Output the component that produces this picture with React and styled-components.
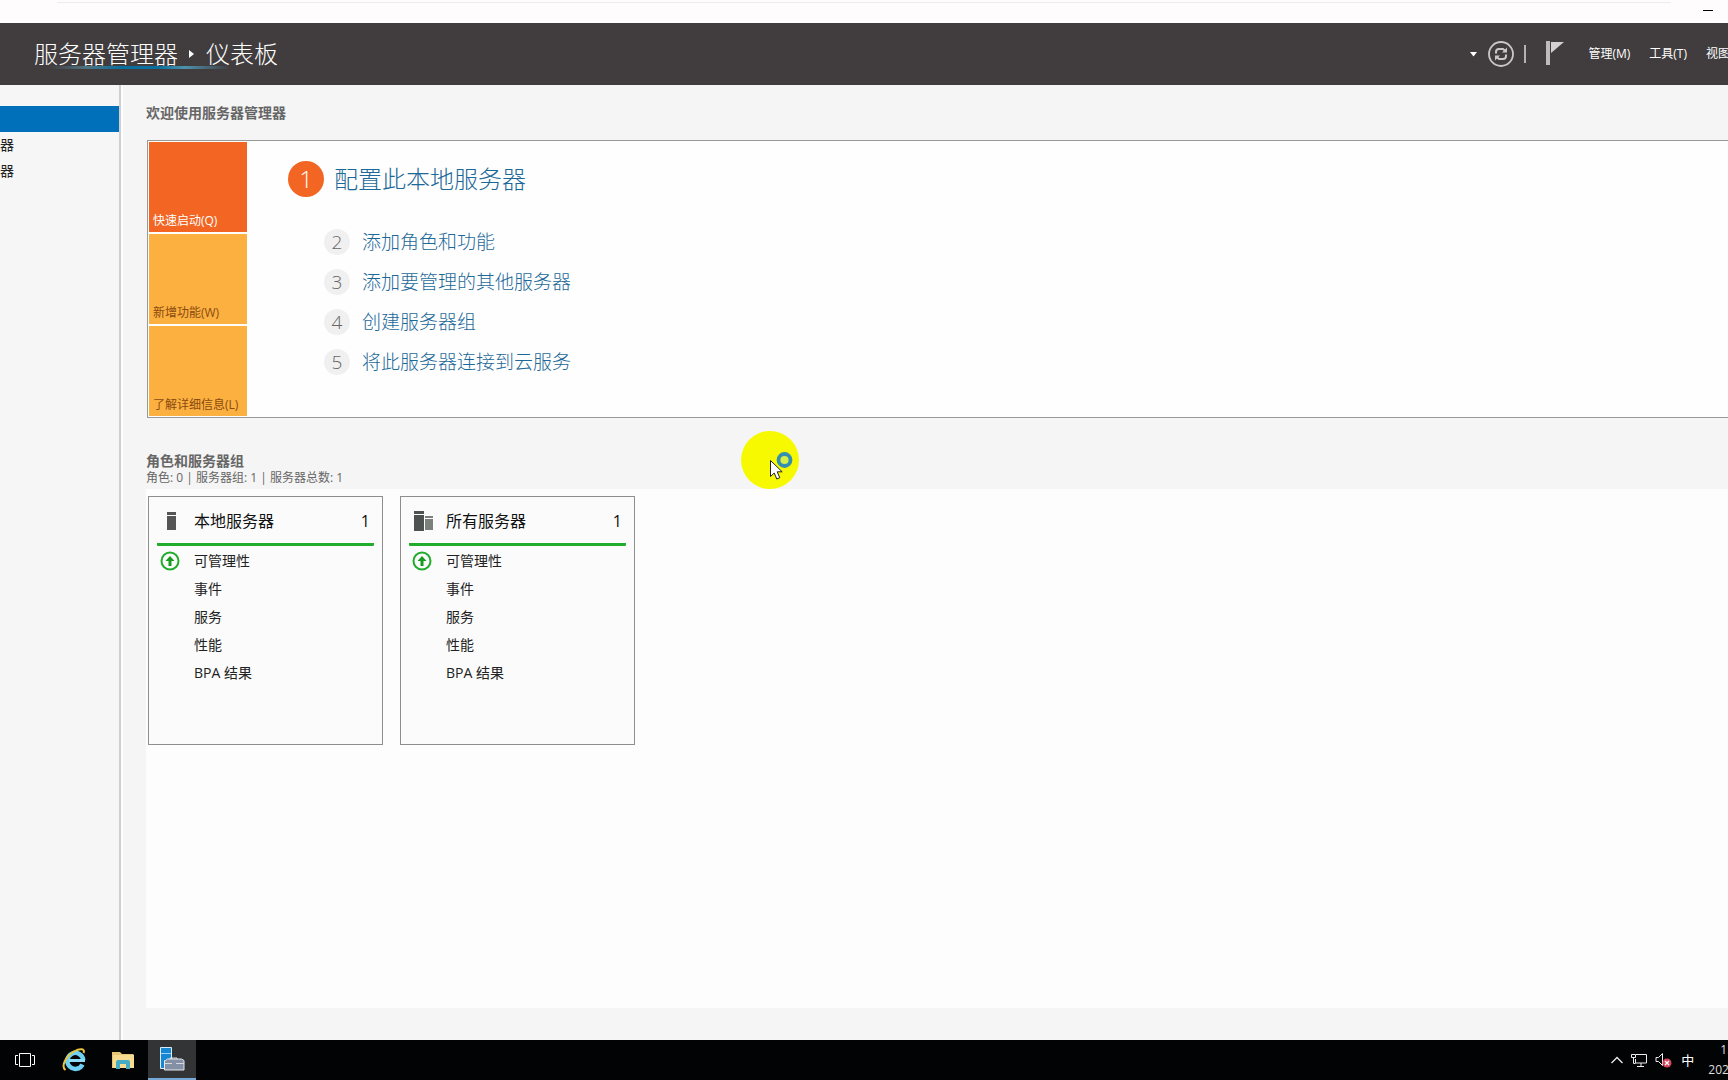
import React from 'react'
import styled, { createGlobalStyle } from 'styled-components'

const steps = [
  { number: 2, label: '添加角色和功能' },
  { number: 3, label: '添加要管理的其他服务器' },
  { number: 4, label: '创建服务器组' },
  { number: 5, label: '将此服务器连接到云服务' },
]

const groups = [
  { name: '本地服务器', count: 1, icon: ServerIcon },
  { name: '所有服务器', count: 1, icon: ServersIcon },
]

const groupItems = ['可管理性', '事件', '服务', '性能', 'BPA 结果']

function ServerIcon() {
  return (
    <svg width="20" height="20" viewBox="0 0 20 20" fill="#555">
      <rect x="6" y="1" width="9" height="3" />
      <rect x="6" y="5" width="9" height="14" />
    </svg>
  )
}

function ServersIcon() {
  return (
    <svg width="20" height="20" viewBox="0 0 20 20">
      <path d="M1 0h10v3H1zM1 4h10v16H1z" fill="#4d514f" />
      <path d="M12 5h8v2h-8zM12 8h8v11h-8z" fill="#7b807d" />
    </svg>
  )
}

function UpIcon() {
  return (
    <svg width="20" height="20" viewBox="0 0 20 20" fill="none">
      <circle cx="10" cy="10" r="8.5" stroke="#22ac2c" strokeWidth="2" />
      <path d="M10 5l4.500 5h-3v5h-3v-5h-3z" fill="#179b21" />
    </svg>
  )
}

function RefreshIcon() {
  return (
    <svg width="26" height="26" viewBox="0 0 26 26" fill="none" stroke="#c9c7c7">
      <circle cx="13" cy="13" r="12" strokeWidth="1.8" />
      <path d="M8 12.500V11a3 3 0 0 1 3-3h4l3 2.500M18 13.500V15a3 3 0 0 1-3 3h-4l-3-2.500" strokeWidth="2" />
      <path d="M19 6.500v5h-5zM7 19.500v-5h5z" fill="#c9c7c7" stroke="none" />
    </svg>
  )
}

function FlagIcon() {
  return (
    <svg width="18" height="26" viewBox="0 0 18 26">
      <path d="M0 0h4v24H0z" fill="#bdbbbb" />
      <path d="M5 1h13L5 12z" fill="#d2d0d0" />
    </svg>
  )
}

function TaskViewIcon() {
  return (
    <svg width="20" height="14" viewBox="0 0 20 14" fill="none" stroke="#fff">
      <path d="M4.500.5h11v13h-11zM3 2.500H.5v9H3M17 2.500h2.500v9H17" />
    </svg>
  )
}

function BrowserIcon() {
  return (
    <svg width="24" height="24" viewBox="0 0 24 24" fill="none">
      <path
        d="M20.500 16.500a8 8 0 1 1 .8-4.500"
        stroke="#6fd0f5"
        strokeWidth="4.500"
      />
      <path d="M7 12.500h16" stroke="#8fdcf8" strokeWidth="3" />
      <path
        d="M3.500 22C-1.500 18 4 8 12 3.500 18 0 23.500.5 21.500 5"
        stroke="#e9c53b"
        strokeWidth="2"
      />
    </svg>
  )
}

function FolderIcon() {
  return (
    <svg width="22" height="20" viewBox="0 0 22 20">
      <path d="M0 2h8l2 2h11.500v14H0z" fill="#e4c673" />
      <path d="M1 5h21v13H1z" fill="#f6dc90" />
      <path d="M4 19v-7q0-2 2-2h10q2 0 2 2v7h-4v-5H8v5z" fill="#45acc6" />
    </svg>
  )
}

function ManagerIcon() {
  return (
    <svg width="26" height="26" viewBox="0 0 26 26">
      <path d="M1.500 1.500h11v21h-11z" fill="#1787d2" stroke="#d8ecfa" />
      <path d="M2 7.500h10" stroke="#9bd2f5" />
      <path d="M11 13.500v-1.500h7v1.500" fill="none" stroke="#dde1e8" />
      <path d="M6.500 14.500l2-1.500h14l2.500 1.500v9.500H5.500v-9.500z" fill="#8490a5" stroke="#e5e8ee" />
      <path d="M6 17.500h7m4 0h8" stroke="#d4d9e2" />
    </svg>
  )
}

function TrayChevron() {
  return (
    <svg width="12" height="8" viewBox="0 0 12 8" fill="none" stroke="#e8e8e8" strokeWidth="1.400">
      <path d="M.5 7L6 1.500 11.500 7" />
    </svg>
  )
}

function NetworkIcon() {
  return (
    <svg width="16" height="14" viewBox="0 0 16 14" fill="none" stroke="#eee">
      <path d="M5 1.500h10.500v8.500H4.500V6M10 10v3M6 13.500h7" />
      <path d="M.5 1.500h4v3h-4zM2.500 5v5.500h2" />
    </svg>
  )
}

function VolumeIcon() {
  return (
    <svg width="18" height="16" viewBox="0 0 18 16" fill="none">
      <path d="M1 5.500h2.500l4-4v12l-4-4H1z" stroke="#eee" />
      <circle cx="12" cy="11" r="4.500" fill="#d4455a" />
      <path d="M10 9l4 4m0-4l-4 4" stroke="#fff" strokeWidth="1.200" />
    </svg>
  )
}

function Pointer() {
  return (
    <PointerSpot width="60" height="60" viewBox="0 0 60 60" aria-hidden="true">
      <circle cx="29" cy="29" r="29" fill="#f7f900" />
      <circle cx="43.500" cy="29" r="6" fill="#d6ee48" stroke="#358fae" strokeWidth="3.800" />
      <path
        d="M29.500 29.500v16l3.700-3.500 2.600 6 3-1.300-2.600-5.900h5z"
        fill="#fff"
        stroke="#222"
      />
    </PointerSpot>
  )
}

function GroupCard({ group }) {
  const Icon = group.icon
  return (
    <Card>
      <CardHeader>
        <Icon />
        <CardTitle>{group.name}</CardTitle>
        <span>{group.count}</span>
      </CardHeader>
      <CardList>
        {groupItems.map((item, i) => (
          <CardItem key={item}>
            <IconSlot>{i === 0 && <UpIcon />}</IconSlot>
            <CardLink href="#">{item}</CardLink>
          </CardItem>
        ))}
      </CardList>
    </Card>
  )
}

function App() {
  return (
    <Desktop>
      <GlobalStyle />
      <TitleBar>
        <Minimize aria-label="最小化" />
      </TitleBar>
      <Header>
        <Breadcrumb>
          <span>服务器管理器</span>
          <svg width="6" height="10" viewBox="0 0 6 10">
            <path d="M0 1l5 4-5 4z" fill="#fff" />
          </svg>
          <span>仪表板</span>
        </Breadcrumb>
        <Tools>
          <IconButton aria-label="历史记录">
            <svg width="8" height="5" viewBox="0 0 8 5">
              <path d="M0 0h7L3.500 4.500z" fill="#fff" />
            </svg>
          </IconButton>
          <IconButton aria-label="刷新">
            <RefreshIcon />
          </IconButton>
          <Separator />
          <IconButton aria-label="通知">
            <FlagIcon />
          </IconButton>
        </Tools>
        <Menu>
          <MenuButton>管理(M)</MenuButton>
          <MenuButton>工具(T)</MenuButton>
          <MenuButton>视图</MenuButton>
        </Menu>
      </Header>
      <Body>
        <Sidebar>
          <SideLink href="#" aria-label="仪表板" $active />
          <SideLink href="#">器</SideLink>
          <SideLink href="#">器</SideLink>
        </Sidebar>
        <Content>
          <SectionTitle>欢迎使用服务器管理器</SectionTitle>
          <Welcome>
            <Tiles>
              <Tile $active>快速启动(Q)</Tile>
              <Tile>新增功能(W)</Tile>
              <Tile>了解详细信息(L)</Tile>
            </Tiles>
            <Steps>
              <MainStep>
                <MainNumber>1</MainNumber>
                <StepLink href="#">配置此本地服务器</StepLink>
              </MainStep>
              {steps.map((step) => (
                <Step key={step.number}>
                  <StepNumber>{step.number}</StepNumber>
                  <StepLink href="#">{step.label}</StepLink>
                </Step>
              ))}
            </Steps>
          </Welcome>
          <GroupsHeading>
            <SectionTitle>角色和服务器组</SectionTitle>
            <Summary>角色: 0 | 服务器组: 1 | 服务器总数: 1</Summary>
          </GroupsHeading>
          <Groups>
            {groups.map((group) => (
              <GroupCard key={group.name} group={group} />
            ))}
          </Groups>
        </Content>
      </Body>
      <Taskbar>
        <TaskButton aria-label="任务视图">
          <TaskViewIcon />
        </TaskButton>
        <TaskButton aria-label="Internet Explorer">
          <BrowserIcon />
        </TaskButton>
        <TaskButton aria-label="文件资源管理器">
          <FolderIcon />
        </TaskButton>
        <TaskButton aria-label="服务器管理器" $active>
          <ManagerIcon />
        </TaskButton>
        <Tray>
          <TrayChevron />
          <NetworkIcon />
          <VolumeIcon />
          <span>中</span>
          <Clock>
            <Time>15</Time>
            <span>202</span>
          </Clock>
        </Tray>
      </Taskbar>
      <Pointer />
    </Desktop>
  )
}

const GlobalStyle = createGlobalStyle`
  * {
    box-sizing: border-box;
  }

  body {
    margin: 0;
    font-family: 'Open Sans', 'Noto Sans CJK SC', sans-serif;
    font-size: 14px;
    color: #222;
    background: #f5f5f5;
  }

  button {
    margin: 0;
    padding: 0;
    border: 0;
    background: none;
    color: inherit;
    font: inherit;
  }

  a {
    color: inherit;
    text-decoration: none;
  }

  svg {
    display: block;
    flex: none;
  }
`

const Desktop = styled.div`
  position: relative;
  display: flex;
  flex-direction: column;
  min-height: 100vh;
  overflow: hidden;
`

const TitleBar = styled.div`
  display: flex;
  justify-content: flex-end;
  height: 23px;
  padding: 10px 15px 0 0;
  background: linear-gradient(#ececf0, #ececf0) 57px 2px / calc(100% - 114px) 1px no-repeat #fefcfc;
`

const Minimize = styled.button`
  width: 10px;
  height: 1px;
  background: #000;
`

const Header = styled.header`
  display: flex;
  align-items: center;
  height: 62px;
  padding-left: 34px;
  background: #413d3e;
  color: #fff;
`

const Breadcrumb = styled.div`
  position: relative;
  display: flex;
  align-items: center;
  gap: 11px;
  font-size: 24px;
  font-weight: 300;
  line-height: 36px;

  &::after {
    content: '';
    position: absolute;
    left: 16px;
    right: 48px;
    bottom: 3px;
    height: 3px;
    background: linear-gradient(
      90deg,
      transparent,
      #4e7381 20%,
      #086f9e 40%,
      #086f9e 60%,
      #4e91ad 75%,
      transparent
    );
  }
`

const Tools = styled.div`
  display: flex;
  align-items: center;
  gap: 10px;
  margin-left: auto;
`

const IconButton = styled.button`
  display: flex;
`

const Separator = styled.div`
  width: 2px;
  height: 18px;
  margin-right: 10px;
  background: #b4b1b1;
`

const Menu = styled.nav`
  display: flex;
  gap: 19px;
  margin: 0 -2px 0 24px;
  font-size: 12px;
  line-height: 18px;
`

const MenuButton = styled.button`
  white-space: nowrap;
`

const Body = styled.div`
  display: flex;
  flex: 1;
`

const Sidebar = styled.nav`
  flex: none;
  width: 121px;
  margin-right: 1px;
  padding-top: 21px;
  border-right: 2px solid #cfcfcf;
  background: #f6f6f7;
  box-shadow: 2px 0 0 #fdfdfd;
`

const SideLink = styled.a`
  display: block;
  height: 26px;
  background: ${(props) => (props.$active ? '#0070ba' : 'transparent')};
  color: #222;
  line-height: 26px;
`

const Content = styled.main`
  display: flex;
  flex: 1;
  flex-direction: column;
  min-width: 0;
  padding: 18px 0 32px 24px;
`

const SectionTitle = styled.h2`
  margin: 0;
  color: #666;
  font-size: 14px;
  font-weight: 700;
  line-height: 20px;
`

const Welcome = styled.section`
  display: flex;
  margin: 17px 0 0 1px;
  padding: 1px;
  border: 1px solid #999;
  border-right: 0;
  background: #fefefe;
`

const Tiles = styled.div`
  display: flex;
  flex-direction: column;
  gap: 2px;
`

const Tile = styled.button`
  display: flex;
  align-items: flex-end;
  width: 98px;
  height: 90px;
  padding: 0 0 2px 4px;
  background: ${(props) => (props.$active ? '#f26522' : '#fbb040')};
  color: ${(props) => (props.$active ? '#fff' : '#8a4a10')};
  font-size: 12px;
  line-height: 18px;
  white-space: nowrap;
`

const Steps = styled.div`
  padding: 19px 0 0 41px;
  color: #1c6898;
  font-weight: 300;
`

const MainStep = styled.div`
  display: flex;
  align-items: center;
  gap: 10px;
  margin-bottom: 25px;
  font-size: 24px;
  line-height: 36px;
`

const MainNumber = styled.span`
  width: 36px;
  border-radius: 50%;
  background: #f26522;
  color: #fff;
  text-align: center;
`

const Step = styled.div`
  display: flex;
  align-items: center;
  gap: 12px;
  height: 40px;
  padding-left: 36px;
  font-size: 19px;
  line-height: 26px;
`

const StepNumber = styled.span`
  width: 26px;
  border-radius: 50%;
  background: #f0f0f0;
  color: #666;
  text-align: center;
`

const StepLink = styled.a`
  white-space: nowrap;
`

const GroupsHeading = styled.div`
  padding: 33px 0 4px;
`

const Summary = styled.p`
  margin: 0;
  color: #666;
  font-size: 12px;
  line-height: 14px;
`

const Groups = styled.section`
  display: flex;
  flex: 1;
  align-items: flex-start;
  gap: 17px;
  padding: 7px 0 0 2px;
  background: #fdfdfd;
`

const Card = styled.article`
  width: 235px;
  min-height: 249px;
  padding: 8px;
  border: 1px solid #8e8e8e;
  background: #fbfbfb;
`

const CardHeader = styled.header`
  display: flex;
  align-items: center;
  gap: 13px;
  height: 41px;
  padding: 0 4px 6px;
  border-bottom: 3px solid #22ac2c;
  border-radius: 1px;
  color: #111;
  font-size: 16px;
  line-height: 24px;
`

const CardTitle = styled.h3`
  flex: 1;
  margin: 0;
  font-size: 16px;
  font-weight: 400;
`

const CardList = styled.ul`
  margin: 0;
  padding: 1px 0 0 3px;
  list-style: none;
`

const CardItem = styled.li`
  display: flex;
  align-items: center;
  gap: 14px;
  height: 28px;
`

const IconSlot = styled.span`
  width: 20px;
`

const CardLink = styled.a`
  line-height: 20px;
`

const Taskbar = styled.footer`
  display: flex;
  gap: 1px;
  height: 40px;
  padding-left: 1px;
  background: #020305;
  color: #fff;
`

const TaskButton = styled.button`
  display: flex;
  align-items: center;
  justify-content: center;
  width: 48px;
  border-bottom: ${(props) => (props.$active ? '2px solid #76a9d8' : '0')};
  background: ${(props) => (props.$active ? '#333436' : 'transparent')};
`

const Tray = styled.div`
  display: flex;
  align-items: center;
  gap: 8px;
  margin: 0 -6px 0 auto;
  font-size: 13px;
  line-height: 18px;
`

const Clock = styled.div`
  display: flex;
  flex-direction: column;
  margin-left: 6px;
  color: #ddd;
  font-size: 12px;
  line-height: 20px;
`

const Time = styled.span`
  padding-left: 12px;
`

const PointerSpot = styled.svg`
  position: absolute;
  top: 431px;
  left: 741px;
  pointer-events: none;
`

export default App
